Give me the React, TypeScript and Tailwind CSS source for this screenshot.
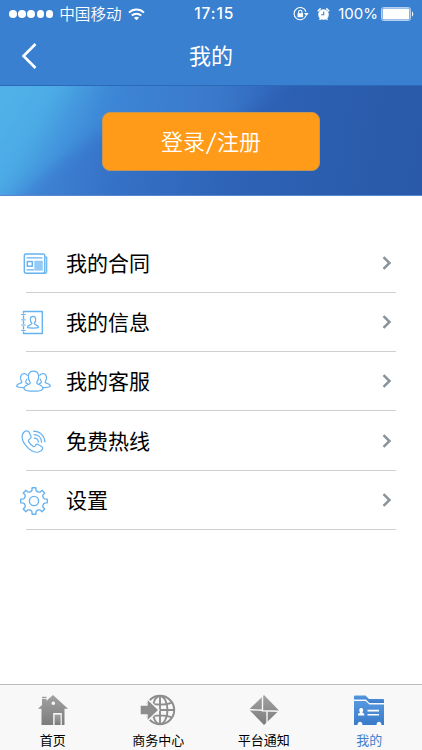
import type { ReactNode } from 'react';

const line = {
  fill: 'none',
  stroke: '#67b2f0',
  strokeWidth: 1.2,
  strokeLinejoin: 'round',
  strokeLinecap: 'round',
} as const;

const ContractIcon = () => (
  <svg width="36" height="30" viewBox="0 0 36 30" {...line}>
    <path d="M27 5H10a1.700 1.700 0 0 0-1.700 1.700v15.600a2 2 0 0 0 2 2H27a1.800 1.800 0 0 0 1.800-1.800V6.800A1.800 1.800 0 0 0 27 5z" strokeWidth="1.400" />
    <path d="M29.200 8h1.500v14.300a2 2 0 0 1-2 2H27" />
    <path d="M11 8.800h15M11 20.800h6.500" />
    <path d="M11.300 12.400h5v4.800h-5z" strokeWidth="1.500" />
    <path d="M18.800 12h7.700v9.300h-7.700z" fill="#93caf7" stroke="#93caf7" strokeWidth="0.6" />
  </svg>
);

const InfoIcon = () => (
  <svg width="36" height="30" viewBox="0 0 36 30" {...line}>
    <path d="M7.500 5V3.500h18.800v22H7.500V24M7.500 8v2.500M7.500 13v2.500M7.500 18.500V21" strokeWidth="1.400" />
    <path d="M5.500 6.500h3.800M5.500 11.800h3.800M5.500 17h3.800M5.500 22.500h3.800" strokeWidth="1" />
    <path d="M11.500 19.600c-.1-3.200 3.900-2.300 4.400-4.200-2.300-2.200-2.400-7 1.100-7s3.400 4.800 1.100 7c.5 1.900 4.500 1 4.400 4.200-1.600.6-9.400.6-11 0z" />
  </svg>
);

const ServiceIcon = () => (
  <svg width="36" height="30" viewBox="0 0 36 30" {...line}>
    <path d="M8 21.800c0-4.500 5.400-3.500 6.200-5.600.3-.8-.2-1.400-.6-2.100-1.200-1.800-1.500-3.600-1.200-5.600.4-2.700 2.400-4.300 5.100-4.300s4.700 1.600 5.100 4.300c.3 2 0 3.800-1.200 5.600-.4.7-.9 1.300-.6 2.100.8 2.100 6.200 1.100 6.200 5.600-2.500 3.200-16.500 3.200-19 0z" />
    <path d="M8 20.500c-2.800.2-5.500-.1-7.300-1 .1-3.700 4.600-2.300 5.100-4.500.2-1-.8-1.500-1.100-2.700-.7-3 .6-5.600 3.300-5.600 1.400 0 2.500.4 3.300 1.600M10.800 12.300c-.4 1.200-1.500 2-1.100 3 .3.900 1.200 1.100 2.100 1.500" />
    <path d="M27 20.500c2.800.2 5.500-.1 7.300-1-.1-3.700-4.600-2.300-5.100-4.500-.2-1 .8-1.500 1.100-2.700.7-3-.6-5.600-3.300-5.600-1.400 0-2.500.4-3.300 1.600M24.200 12.300c.4 1.200 1.500 2 1.100 3-.3.900-1.200 1.100-2.100 1.500" />
  </svg>
);

const PhoneIcon = () => (
  <svg width="36" height="30" viewBox="0 0 36 30" {...line}>
    <path d="M8.400 4.800C4.800 7.800 5.600 13.500 9.500 18.200c3.600 4.400 8.900 7.800 13.200 6.800 2-.5 3.500-1.800 4-3.200.3-.9-.1-1.600-.9-2.100l-3.700-2.200c-.9-.5-1.700-.3-2.300.5l-.9 1.100c-.6.7-1.300.6-2.200 0-1.800-1.200-3-2.700-4-4.500-.5-.9-.4-1.700.4-2.200l1.300-.9c.8-.6 1-1.300.6-2.200l-2-4.200c-.9-1.600-3-1.600-4.600-.3z" />
    <path d="M18.300 11.100c2.300 0 3.900 1.700 4.100 4M18.100 7.600c4.200 0 7.200 3.100 7.500 7.500M17.500 4.200c6.200-.1 11 4.500 11.400 10.700" />
  </svg>
);

// eight rounded teeth around the hub
const gearPath = Array.from({ length: 8 }, (_, i) => {
  const teeth = [
    [-0.31, 10],
    [-0.2, 10.6],
    [-0.14, 13.4],
    [0.14, 13.4],
    [0.2, 10.6],
    [0.31, 10],
  ];
  return teeth
    .map(([offset, radius]) => {
      const angle = (i * Math.PI) / 4 + offset;
      return `${(18 + radius * Math.sin(angle)).toFixed(2)} ${(15 - radius * Math.cos(angle)).toFixed(2)}`;
    })
    .join('L');
}).join('L');

const GearIcon = () => (
  <svg width="36" height="30" viewBox="0 0 36 30" {...line} strokeWidth={1.4}>
    <path d={`M${gearPath}z`} />
    <circle cx="18" cy="15" r="4.600" />
  </svg>
);

const menu = [
  { label: '我的合同', icon: ContractIcon },
  { label: '我的信息', icon: InfoIcon },
  { label: '我的客服', icon: ServiceIcon },
  { label: '免费热线', icon: PhoneIcon },
  { label: '设置', icon: GearIcon },
];

const StatusBar = () => (
  <div className="flex h-7 items-center pl-[9px] pr-2 text-white">
    <div className="flex gap-[1.7px]">
      {[0, 1, 2, 3, 4].map((dot) => (
        <span key={dot} className="size-[7.5px] rounded-full bg-white" />
      ))}
    </div>
    <span className="ml-[6px] w-[63px] whitespace-nowrap pb-px text-[15.600px] font-[350] leading-[27px]">中国移动</span>
    <svg className="ml-[6px]" width="17" height="13" viewBox="0 0 17 13" fill="none" stroke="white" strokeWidth="2">
      <path d="M1 4.600c4.200-4.100 10.800-4.100 15 0M3.800 7.500c2.700-2.500 6.700-2.500 9.400 0" />
      <path d="M5.900 9.700c1.500-1.400 3.700-1.400 5.200 0L8.500 12.300z" fill="white" stroke="none" />
    </svg>
    <span className="ml-[49px] w-[41px] whitespace-nowrap font-['Inter',sans-serif] text-[15.500px] font-medium leading-7 tracking-[0.9px]">17:15</span>
    <svg className="ml-[58px]" width="16" height="14" viewBox="0 0 16 14" fill="none" stroke="white">
      <path d="M13 8.600A6.100 6.100 0 1 1 13 4.700" strokeWidth="1.100" />
      <path d="M11 6h4.700l-2.300 3z" fill="white" stroke="none" />
      <path d="M4.500 6.200h5.600v4H4.500z" fill="white" stroke="none" />
      <path d="M5.600 6.500V5a1.700 1.700 0 0 1 3.400 0v1.500" strokeWidth="1.100" />
    </svg>
    <svg className="ml-[8px]" width="13" height="14" viewBox="0 0 13 14">
      <circle cx="6.500" cy="7.500" r="5.300" fill="white" />
      <path d="M.8 4.200 3.700 1.400M12.200 4.200 9.300 1.400M2.500 12.800l1.200-1.400M10.500 12.800l-1.200-1.400" stroke="white" strokeWidth="1.500" />
      <path d="M6.700 4.500v3.300H4.200" fill="none" stroke="#3980d2" strokeWidth="1.100" />
    </svg>
    <span className="ml-[8px] w-[40px] whitespace-nowrap font-['Inter',sans-serif] text-[15px] leading-7">100%</span>
    <svg className="ml-auto" width="33" height="14" viewBox="0 0 33 14">
      <rect x=".5" y=".5" width="29" height="13" rx="2" fill="none" stroke="#b6d1f0" />
      <rect x="1.600" y="1.600" width="26.800" height="10.800" rx="1" fill="white" />
      <path d="M31 4.500c1.600.5 1.600 4.500 0 5z" fill="white" />
    </svg>
  </div>
);

const Banner = () => (
  <div className="relative h-[111px] border-t border-[#2d69b9]">
    <svg className="absolute inset-0" width="422" height="110" viewBox="0 0 422 110" preserveAspectRatio="none">
      <defs>
        <linearGradient id="base" x1="0" y1="0" x2="422" y2="60" gradientUnits="userSpaceOnUse">
          <stop offset="0" stopColor="#458fdd" />
          <stop offset=".3" stopColor="#3571c6" />
          <stop offset=".6" stopColor="#2d62b5" />
          <stop offset="1" stopColor="#2959a8" />
        </linearGradient>
        <linearGradient id="sweep" x1="0" y1="0" x2="290" y2="20" gradientUnits="userSpaceOnUse">
          <stop offset="0" stopColor="#48a0e2" />
          <stop offset=".4" stopColor="#3c85d5" />
          <stop offset=".75" stopColor="#3a78ca" />
          <stop offset="1" stopColor="#2d62b8" />
        </linearGradient>
        <linearGradient id="light" x1="0" y1="30" x2="75" y2="75" gradientUnits="userSpaceOnUse">
          <stop offset="0" stopColor="#50b1e8" />
          <stop offset=".4" stopColor="#4cabe5" />
          <stop offset="1" stopColor="#4293dc" stopOpacity="0" />
        </linearGradient>
        <filter id="soft" x="-10%" y="-15%" width="120%" height="130%">
          <feGaussianBlur stdDeviation="7" />
        </filter>
      </defs>
      <rect width="422" height="110" fill="url(#base)" />
      <path d="M-40-25H312C268 14 245 32 210 45L100 45 2 122H-40z" fill="url(#sweep)" filter="url(#soft)" />
      <path d="M-40-25H155C123 6 98 27 74 48 47 70 25 87-1 111H-40z" fill="url(#light)" filter="url(#soft)" />
      <path d="M0 109.500h422" stroke="#5889cc" />
    </svg>
    <div className="relative flex justify-center pt-[26px]">
      <button className="flex h-[59px] w-[218px] items-center justify-center rounded-[8px] border border-[#c49654] bg-[#ff9b18] pb-[2px] text-[22px] font-[350] text-white">
        登录<span className="inline-block w-[12px] scale-x-130 text-center">/</span>注册
      </button>
    </div>
  </div>
);

const HomeIcon = () => (
  <svg width="34" height="34" viewBox="0 0 34 34" fill="url(#gray)">
    <defs>
      <linearGradient id="gray" x1="0" y1="0" x2="0" y2="1">
        <stop offset="0" stopColor="#a2a2a2" />
        <stop offset="1" stopColor="#7c7c7c" />
      </linearGradient>
    </defs>
    <path fillRule="evenodd" d="M6 3.800h4.500v4L17 2l15 13.800h-3.500V32h-2.700V20h-8.600v12H5.500V15.800H2l4-3.900zM17.300 8.500a1.800 1.800 0 1 0 0 3.600 1.800 1.800 0 0 0 0-3.600z" />
    <path d="M18.600 21.600h6V32h-6z" />
    <path d="M5.500 5.500h5.300" stroke="#f8f8f8" strokeWidth=".8" />
  </svg>
);

const BusinessIcon = () => (
  <svg width="34" height="34" viewBox="0 0 34 34" className="overflow-visible">
    <circle cx="19" cy="17" r="14.200" fill="#f8f8f8" stroke="#8d8d8d" strokeWidth="2" />
    <g fill="none" stroke="#8d8d8d" strokeWidth="1.900">
      <path d="M19 3v28M5 17h28M7.500 9.800c6.500 2.400 16.500 2.400 23 0M7.500 24.200c6.500-2.400 16.500-2.400 23 0" />
      <ellipse cx="19" cy="17" rx="7.500" ry="14" />
    </g>
    <path d="M-1 12h7V5.500L18 17 6 28.500V22h-7z" fill="#8d8d8d" stroke="#f8f8f8" strokeWidth="1.400" />
  </svg>
);

const NoticeIcon = () => (
  <svg width="34" height="34" viewBox="0 0 34 34">
    <path d="M17 2 32 17.500 17 32 2 16.500z" fill="url(#gray)" />
    <path d="M15.500 2v15.800L33 18.300M1 16.500l14.500.8M20 18v12" fill="none" stroke="#f8f8f8" strokeWidth="1.400" />
  </svg>
);

const MineIcon = () => (
  <svg width="34" height="34" viewBox="0 0 34 34">
    <defs>
      <linearGradient id="blue" x1="0" y1="0" x2="0" y2="1">
        <stop offset="0" stopColor="#5598df" />
        <stop offset="1" stopColor="#3a7bc9" />
      </linearGradient>
    </defs>
    <path d="M2 6.500V3.500Q2 2.500 3 2.500h10.500l3.500 3.500h14q1 0 1 1V10H17.500L14 6.500z" fill="url(#blue)" />
    <path d="M2 8h11.500l4 3.500H32V32h-2.500c0-4.300-5-4.300-5 0h-14c0-4.300-5-4.300-5 0H2z" fill="url(#blue)" />
    <path d="M6 22.500c0-2.800 1.800-2 2-3.300-1.300-1.800-.8-4.200 1.200-4.200s2.500 2.400 1.200 4.200c.2 1.300 2 .5 2 3.300zM15.500 16.700H27v1.800H15.500zM15.500 20.900H27v1.700H15.500z" fill="white" />
  </svg>
);

type TabProps = {
  label: string;
  active?: boolean;
  children: ReactNode;
};

const Tab = ({ label, active, children }: TabProps) => (
  <div className={`flex flex-1 flex-col items-center pt-[8px] text-[13px] leading-[18px] ${active ? 'text-[#3f80cd]' : 'text-black'}`}>
    {children}
    <span className="mt-[4px]">{label}</span>
  </div>
);

export default function App() {
  return (
    <div className="flex h-[750px] w-[422px] flex-col overflow-hidden bg-white font-['Noto_Sans_CJK_SC',sans-serif]">
      <header className="h-[85px] bg-[#3980d0]">
        <StatusBar />
        <div className="grid h-[56px] grid-cols-3 items-center text-white">
          <svg className="ml-[20px]" width="20" height="28" viewBox="0 0 20 28" fill="none" stroke="white" strokeWidth="2.600">
            <path d="M15.500 2 3.500 14l12 12" />
          </svg>
          <h1 className="pb-[3px] text-center text-[22px]">我的</h1>
        </div>
      </header>

      <Banner />

      <ul className="flex-1 pt-[37.500px]">
        {menu.map((item) => (
          <li key={item.label} className="ml-[26px] mr-[26px] flex h-[59.300px] items-center border-b border-[#cfcfcf]">
            <div className="-ml-[10px] mt-[2px]">
              <item.icon />
            </div>
            <span className="ml-[14px] text-[21px] text-black">{item.label}</span>
            <svg className="ml-auto mr-[4px]" width="10" height="14" viewBox="0 0 10 14" fill="none" stroke="#89939c" strokeWidth="2.500">
              <path d="M1.500 1.200 7.500 7l-6 5.800" />
            </svg>
          </li>
        ))}
      </ul>

      <nav className="flex h-[66px] border-t border-[#bcbcbc] bg-[#f8f8f8]">
        <Tab label="首页"><HomeIcon /></Tab>
        <Tab label="商务中心"><BusinessIcon /></Tab>
        <Tab label="平台通知"><NoticeIcon /></Tab>
        <Tab label="我的" active><MineIcon /></Tab>
      </nav>
    </div>
  );
}
